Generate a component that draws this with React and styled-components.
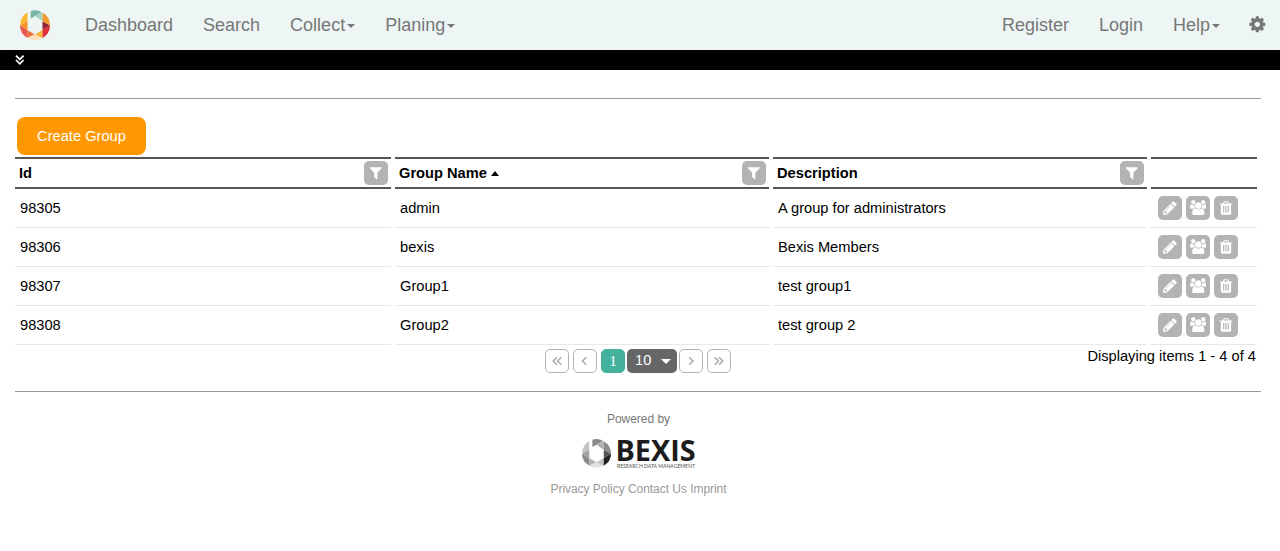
import React from 'react';
import styled, { createGlobalStyle } from 'styled-components';

const GlobalStyle = createGlobalStyle`
  * { box-sizing: border-box; }
  body {
    margin: 0;
    background: #fff;
    color: #000;
    font: 14.67px/20px "Liberation Sans", Arial, sans-serif;
  }
`;

const Navbar = styled.nav`
  display: flex;
  align-items: center;
  height: 50px;
  padding: 0 15px 0 20px;
  background: #edf6f5;
  color: #777;
  font-size: 18px;
`;
const Brand = styled.div`
  display: flex;
  width: 30px;
  margin-right: 20px;
`;
const NavItem = styled.a`
  display: flex;
  align-items: center;
  padding: 0 15px;
  white-space: nowrap;
`;
const Spacer = styled.div`
  flex: 1;
`;
const Caret = styled.span`
  border: 4px solid transparent;
  border-top-color: currentColor;
  border-bottom: 0;
  margin: 2px 0 0 2px;
`;
const GearLink = styled.a`
  display: flex;
  width: 15px;
  margin-left: 15px;
  padding-bottom: 1px;
  justify-content: center;
`;
const SubBar = styled.div`
  display: flex;
  align-items: center;
  height: 20px;
  padding: 0 14px 1px;
  background: #000;
  color: #fff;
`;
const Page = styled.main`
  padding: 28px 19px 0 15px;
`;
const Rule = styled.hr`
  margin: 0;
  border: 0;
  height: 1px;
  background: #999;
`;
const CreateButton = styled.button`
  display: block;
  width: 129px;
  height: 38px;
  margin: 18px 0 2px 2px;
  padding: 0;
  border: 0;
  border-radius: 8px;
  background: #ff9800;
  color: #fff;
  font: inherit;
`;
const Row = styled.div`
  display: grid;
  grid-template-columns: 376px 374px 374px 106px;
  column-gap: 4px;
`;
const HeadCell = styled.div`
  display: flex;
  align-items: center;
  height: 32px;
  padding: 0 3px 0 4px;
  border: solid #555;
  border-width: 2px 0;
  font-weight: bold;
`;
const SortArrow = styled.span`
  margin-left: 4px;
  border: 4.5px solid transparent;
  border-top: 0;
  border-bottom: 5px solid #000;
`;
const Cell = styled.div`
  display: flex;
  align-items: center;
  gap: 4px;
  height: 39px;
  padding-left: ${(p) => (p.$actions ? 7 : 5)}px;
  border-bottom: 1px solid #e8e8e8;
`;
const IconButton = styled.span`
  display: flex;
  flex: none;
  align-items: center;
  justify-content: center;
  width: 24px;
  height: 24px;
  padding-bottom: 1px;
  margin-left: ${(p) => (p.$end ? 'auto' : 0)};
  border-radius: 5px;
  background: #b3b3b3;
  color: #fff;
`;
const TableFooter = styled.div`
  display: grid;
  grid-template-columns: 530px 1fr auto;
  height: 46px;
  padding-right: 5px;
`;
const Pager = styled.div`
  display: flex;
  grid-column: 2;
  gap: 4px;
  padding-top: 4px;
`;
const PageButton = styled.span`
  display: flex;
  align-items: center;
  justify-content: center;
  width: 24px;
  height: 24px;
  border: 1px solid ${(p) => (p.$active ? '#45b29d' : '#b3b3b3')};
  border-radius: 5px;
  background: ${(p) => (p.$active ? '#45b29d' : '#fff')};
  color: ${(p) => (p.$active ? '#fff' : '#aaa')};
  font: 15px "Liberation Serif", serif;
`;
const PageSize = styled.span`
  display: flex;
  align-items: center;
  justify-content: space-between;
  width: 50px;
  height: 24px;
  margin: 0 -2px;
  padding: 0 6px 2px 8px;
  border-radius: 5px;
  background: #666;
  color: #fff;
`;
const SizeArrow = styled.span`
  border: 5px solid transparent;
  border-top-color: #fff;
  border-bottom: 0;
  margin-top: 3px;
`;
const Status = styled.span`
  padding-top: 1px;
`;
const Footer = styled.footer`
  display: flex;
  flex-direction: column;
  align-items: center;
  padding: 17px 0 0 1px;
  color: #777;
  font-size: 12px;
  letter-spacing: -0.04px;
`;
const FooterLogo = styled.div`
  display: flex;
  gap: 6px;
  margin: 10px 0;
  height: 30px;

  svg {
    overflow: visible;
  }
`;
const Links = styled.div`
  color: #999;
`;
const GlyphSvg = styled.svg`
  flex: none;
  fill: currentColor;
`;

const GLYPHS = {
  filter: [1792, 'M1595 295q17 41-14 70l-493 493v742q0 42-39 59-13 5-25 5-27 0-45-19l-256-256q-19-19-19-45v-486l-493-493q-31-29-14-70 17-39 59-39h1280q42 0 59 39z'],
  pencil: [1792, 'M491 1536l91-91-235-235-91 91v107h128v128h107zm523-928q0-22-22-22-10 0-17 7l-542 542q-7 7-7 17 0 22 22 22 10 0 17-7l542-542q7-7 7-17zm-54-192l416 416-832 832h-416v-416zm683 96q0 53-37 90l-166 166-416-416 166-165q36-38 90-38 53 0 91 38l235 234q37 39 37 91z'],
  trash: [1792, 'M704 1376v-704q0-14-9-23t-23-9h-64q-14 0-23 9t-9 23v704q0 14 9 23t23 9h64q14 0 23-9t9-23zm256 0v-704q0-14-9-23t-23-9h-64q-14 0-23 9t-9 23v704q0 14 9 23t23 9h64q14 0 23-9t9-23zm256 0v-704q0-14-9-23t-23-9h-64q-14 0-23 9t-9 23v704q0 14 9 23t23 9h64q14 0 23-9t9-23zm-544-992h448l-48-117q-7-9-17-11h-317q-10 2-17 11zm928 32v64q0 14-9 23t-23 9h-96v948q0 83-47 143.500t-113 60.500h-832q-66 0-113-58.500t-47-141.500v-952h-96q-14 0-23-9t-9-23v-64q0-14 9-23t23-9h309l70-167q15-37 54-63t79-26h320q40 0 79 26t54 63l70 167h309q14 0 23 9t9 23z'],
  users: [1920, 'M593 896q-162 5-265 128h-134q-82 0-138-40.500t-56-118.500q0-353 124-353 6 0 43.500 21t97.500 42.500 119 21.500q67 0 133-23-5 37-5 66 0 139 81 256zm1071 637q0 120-73 189.500t-194 69.500h-874q-121 0-194-69.500t-73-189.500q0-53 3.500-103.500t14-109 26.500-108.500 43-97.500 62-81 85.500-53.500 111.500-20q10 0 43 21.500t73 48 107 48 135 21.500 135-21.500 107-48 73-48 43-21.500q61 0 111.500 20t85.500 53.500 62 81 43 97.500 26.500 108.500 14 109 3.500 103.500zm-1024-1277q0 106-75 181t-181 75-181-75-75-181 75-181 181-75 181 75 75 181zm704 384q0 159-112.500 271.500t-271.500 112.500-271.500-112.500-112.500-271.500 112.500-271.500 271.500-112.500 271.500 112.500 112.500 271.500zm576 225q0 78-56 118.500t-138 40.500h-134q-103-123-265-128 81-117 81-256 0-29-5-66 66 23 133 23 59 0 119-21.500t97.500-42.500 43.500-21q124 0 124 353zm-128-609q0 106-75 181t-181 75-181-75-75-181 75-181 181-75 181 75 75 181z'],
  cog: [1792, 'M1152 896q0-106-75-181t-181-75-181 75-75 181 75 181 181 75 181-75 75-181zm512-109v222q0 12-8 23t-20 13l-185 28q-19 54-39 91 35 50 107 138 10 12 10 25t-9 23q-27 37-99 108t-94 71q-12 0-26-9l-138-108q-44 23-91 38-16 136-29 186-7 28-36 28h-222q-14 0-24.500-8.500t-11.500-21.500l-28-184q-49-16-90-37l-141 107q-10 9-25 9-14 0-25-11-126-114-165-168-7-10-7-23 0-12 8-23 15-21 51-66.500t54-70.500q-27-50-41-99l-183-27q-13-2-21-12.500t-8-23.500v-222q0-12 8-23t19-13l186-28q14-46 39-92-40-57-107-138-10-12-10-24 0-10 9-23 26-36 98.500-107.500t94.500-71.500q13 0 26 10l138 107q44-23 91-38 16-136 29-186 7-28 36-28h222q14 0 24.500 8.500t11.500 21.500l28 184q49 16 90 37l142-107q9-9 24-9 13 0 25 10 129 119 165 170 7 8 7 22 0 12-8 23-15 21-51 66.500t-54 70.500q26 50 41 98l183 28q13 2 21 12.500t8 23.500z'],
};

function Glyph({ name, size = 16 }) {
  const [w, d] = GLYPHS[name];
  return (
    <GlyphSvg width={(size * w) / 1792} height={size} viewBox={`0 0 ${w} 1792`}>
      <path d={d} />
    </GlyphSvg>
  );
}

const CHEVRONS = {
  first: 'M5.500 2L2 5.500L5.500 9M9.500 2L6 5.500L9.500 9',
  prev: 'M6.700 2L3.200 5.500L6.700 9',
  next: 'M3.800 2L7.300 5.500L3.800 9',
  last: 'M1.500 2L5 5.500L1.500 9M5.500 2L9 5.500L5.500 9',
  down: 'M1.800 1.500L5.300 5L8.800 1.500M1.800 5.500L5.300 9L8.800 5.500',
};
function Chevron({ kind, width = 1.4 }) {
  return (
    <svg width="12" height="12" viewBox="0 0 11 11" fill="none" stroke="currentColor" strokeWidth={width}>
      <path d={CHEVRONS[kind]} />
    </svg>
  );
}

const COLOR = ['#f9b936', '#f59329', '#e9564f', '#ee6d3b', '#fee1bd', '#f9b936', '#e32f37', '#8f2435', '#f39a2b', '#78b4a6', '#a1d3bd'];
const GREY = ['#c4c4c4', '#a4a4a4', '#8a8a8a', '#b4b4b4', '#e2e2e2', '#c4c4c4', '#222', '#555', '#8c8c8c', '#8a8a8a', '#b0b0b0'];
const FACETS = [
  'M23 6Q0 20 0 47L23 34Z',
  'M0 47L23 34V61Z',
  'M0 47L23 61V85Q0 72 0 47Z',
  'M23 61L46 74L23 85Z',
  'M23 85L46 73L69 85Q46 98 23 85Z',
  'M46 74L69 60V85Z',
  'M69 85V60L92 47Q92 72 69 85Z',
  'M69 34L92 47L69 60Z',
  'M69 7Q92 20 92 47L69 34Z',
  'M33 2Q52-3 67 6L33 25Z',
  'M46 18L69 7V34Z',
];
function RingMark({ colors, size }) {
  return (
    <svg width={size} height={size} viewBox="0 0 92 92">
      {FACETS.map((d, i) => (
        <path key={i} d={d} fill={colors[i]} />
      ))}
    </svg>
  );
}

const GROUPS = [
  ['98305', 'admin', 'A group for administrators'],
  ['98306', 'bexis', 'Bexis Members'],
  ['98307', 'Group1', 'test group1'],
  ['98308', 'Group2', 'test group 2'],
];

const FilterButton = () => (
  <IconButton $end>
    <Glyph name="filter" size={15.5} />
  </IconButton>
);

export default function App() {
  return (
    <>
      <GlobalStyle />
      <Navbar>
        <Brand><RingMark colors={COLOR} size={30.5} /></Brand>
        <NavItem>Dashboard</NavItem>
        <NavItem>Search</NavItem>
        <NavItem>Collect<Caret /></NavItem>
        <NavItem>Planing<Caret /></NavItem>
        <Spacer />
        <NavItem>Register</NavItem>
        <NavItem>Login</NavItem>
        <NavItem>Help<Caret /></NavItem>
        <GearLink><Glyph name="cog" size={18.67} /></GearLink>
      </Navbar>
      <SubBar><Chevron kind="down" width={1.6} /></SubBar>
      <Page>
        <Rule />
        <CreateButton>Create Group</CreateButton>
        <Row>
          <HeadCell>Id<FilterButton /></HeadCell>
          <HeadCell>Group Name<SortArrow /><FilterButton /></HeadCell>
          <HeadCell>Description<FilterButton /></HeadCell>
          <HeadCell />
        </Row>
        {GROUPS.map(([id, name, description]) => (
          <Row key={id}>
            <Cell>{id}</Cell>
            <Cell>{name}</Cell>
            <Cell>{description}</Cell>
            <Cell $actions>
              <IconButton><Glyph name="pencil" /></IconButton>
              <IconButton><Glyph name="users" size={15.5} /></IconButton>
              <IconButton><Glyph name="trash" /></IconButton>
            </Cell>
          </Row>
        ))}
        <TableFooter>
          <Pager>
            <PageButton><Chevron kind="first" /></PageButton>
            <PageButton><Chevron kind="prev" /></PageButton>
            <PageButton $active>1</PageButton>
            <PageSize>10<SizeArrow /></PageSize>
            <PageButton><Chevron kind="next" /></PageButton>
            <PageButton><Chevron kind="last" /></PageButton>
          </Pager>
          <Status>Displaying items 1 - 4 of 4</Status>
        </TableFooter>
        <Rule />
        <Footer>
          <div>Powered by</div>
          <FooterLogo>
            <RingMark colors={GREY} size={29} />
            <svg width="79" height="30" viewBox="0 0 79 30">
              <text x="-1.5" y="22" fontFamily="Open Sans, sans-serif" fontWeight="700" fontSize="28" textLength="80" lengthAdjust="spacingAndGlyphs" fill="#1c1c1c">BEXIS</text>
              <text x="0" y="29" fontFamily="Lato, sans-serif" fontSize="5" textLength="78" lengthAdjust="spacingAndGlyphs" fill="#555">RESEARCH DATA MANAGEMENT</text>
            </svg>
          </FooterLogo>
          <Links>Privacy Policy Contact Us Imprint</Links>
        </Footer>
      </Page>
    </>
  );
}
